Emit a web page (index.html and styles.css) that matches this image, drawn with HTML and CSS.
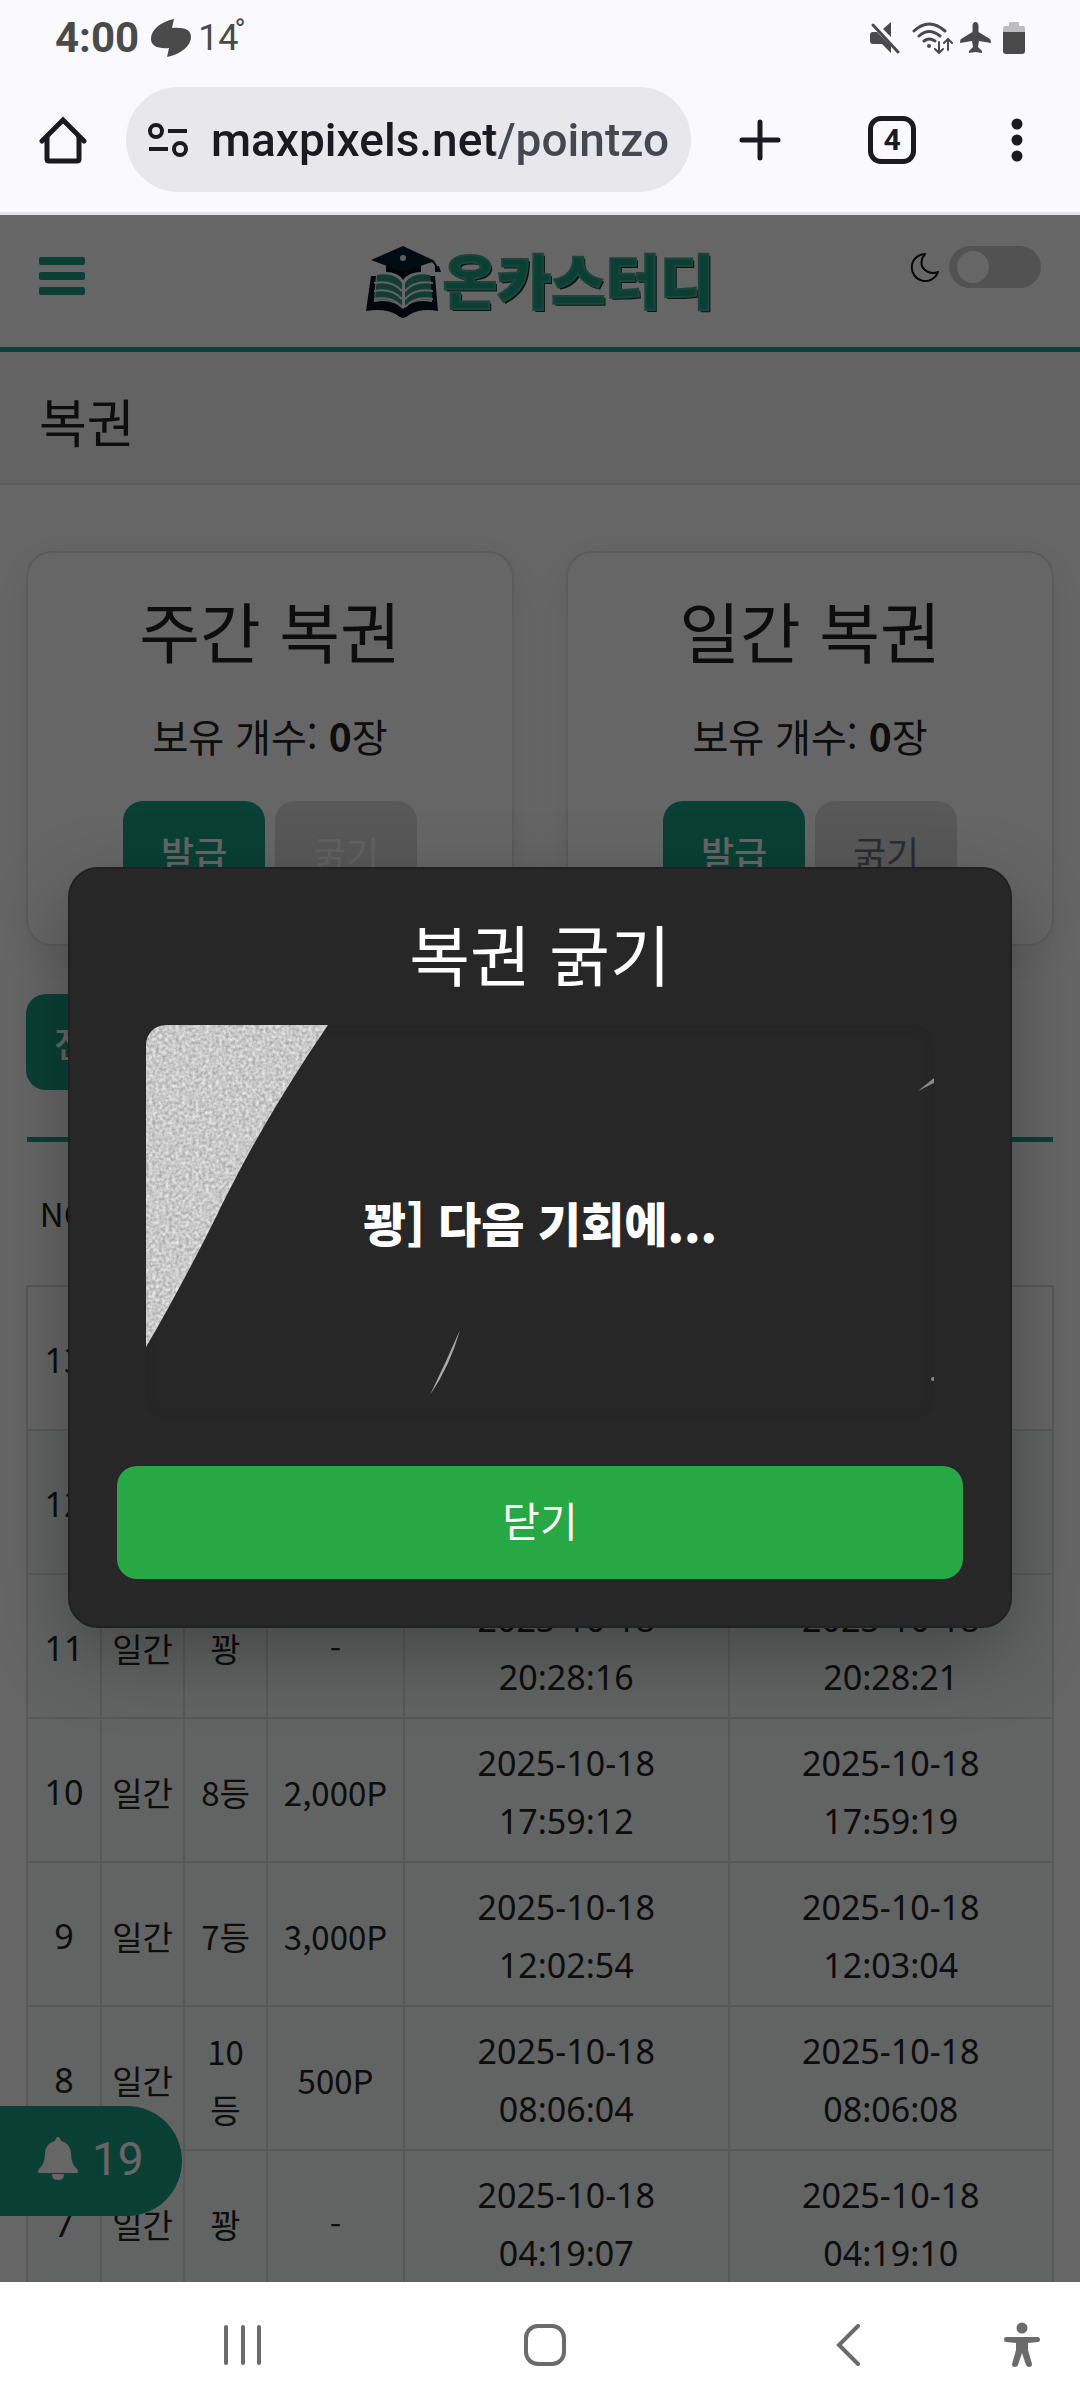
FILE: index.html
```html
<!DOCTYPE html>
<html lang="ko">
<head>
    <meta charset="UTF-8">
    <meta name="viewport" content="width=device-width, initial-scale=1">
    <title>복권</title>
    <link rel="stylesheet" href="styles.css">
</head>
<body>
    <div class="status-bar">
        <span class="clock">4:00</span>
        <svg class="weather-icon" width="40" height="38" viewBox="0 0 40 38"><path d="M23 0C9 3 0 11 0 20c0 7 7 10 18 9l-2 9c14-3 24-11 24-20 0-7-6-10-19-9z" fill="#4a4a4a"/></svg>
        <span class="temp">14<sup>°</sup></span>
        <div class="status-icons">
            <svg width="30" height="32" viewBox="0 0 30 32"><path d="M21 0v15l-8-8zM3 10h4l14 14v7l-9-9H3q-3 0-3-3v-6q0-3 3-3z" fill="#4a4a4a"/><path d="M3 3l25 27" stroke="#4a4a4a" stroke-width="3" stroke-linecap="round"/></svg>
            <svg class="wifi" width="42" height="32" viewBox="0 0 42 32" fill="none" stroke="#4a4a4a" stroke-width="3" stroke-linecap="round"><path d="M2 9q15-14 31 0M7 14q10-9 21 0M12 19q5-4 11 0"/><circle cx="17" cy="24" r="2" fill="#4a4a4a" stroke="none"/><path d="M27 20v10M23 27l4 4 4-4M36 28V18M32 21l4-4 4 4" stroke-width="2"/></svg>
            <svg width="31" height="31" viewBox="0 0 31 31"><path d="M15.500 0c2 0 3 2 3 4v6L30 17q1 1 1 4l-12-2-1 6 4 4v2l-6.500-1L9 31v-2l4-4-1-6-12 2q0-3 1-4l11.500-7V4c0-2 1-4 3-4z" fill="#4a4a4a"/></svg>
            <svg width="22" height="32" viewBox="0 0 22 32"><path d="M6 1q0-1 1-1h8q1 0 1 1v3h4q2 0 2 2v4H0V6q0-2 2-2h4z" fill="#bdbdc1"/><path d="M0 10h22v19q0 3-3 3H3q-3 0-3-3z" fill="#4a4a4a"/></svg>
        </div>
    </div>

    <div class="toolbar">
        <button class="icon-btn" aria-label="홈">
            <svg width="48" height="48" viewBox="0 0 48 48" fill="none" stroke="#1b1a20" stroke-width="5"><path d="M3 25L24 4l21 21" stroke-linecap="round"/><path d="M8 20v23q0 2 2 2h28q2 0 2-2V20"/></svg>
        </button>
        <div class="url-bar">
            <svg width="40" height="34" viewBox="0 0 40 34" fill="none" stroke="#1b1a20" stroke-width="4"><circle cx="8" cy="8" r="6"/><path d="M20 8h19M1 26h19"/><circle cx="32" cy="26" r="6"/></svg>
            <input type="text" class="url-input" value="maxpixels.net/pointzone" aria-label="주소">
        </div>
        <div class="toolbar-actions">
            <button class="icon-btn" aria-label="새 탭">
                <svg width="42" height="42" viewBox="0 0 42 42" stroke="#1b1a20" stroke-width="5" stroke-linecap="round"><path d="M21 3v36M3 21h36"/></svg>
            </button>
            <button class="tab-count">4</button>
            <button class="icon-btn" aria-label="메뉴">
                <svg width="12" height="44" viewBox="0 0 12 44" fill="#1b1a20"><circle cx="6" cy="6" r="5.500"/><circle cx="6" cy="22" r="5.500"/><circle cx="6" cy="38" r="5.500"/></svg>
            </button>
        </div>
    </div>

    <div class="viewport">
        <header class="site-header">
            <button class="menu-btn" aria-label="메뉴 열기"><span></span><span></span><span></span></button>
            <a href="#" class="logo">
                <svg width="76" height="72" viewBox="0 0 76 72">
                    <path d="M5 30h5l-2 26q18-4 29 7 11-11 29-7l-2-26h5l3 35q-18-3-29 4-3 3-6 3t-6-3q-11-7-31-4z" fill="#001522"/>
                    <path d="M11 29q18-3 25 8v25q-8-10-27-8zM64 29q-18-3-25 8v25q8-10 27-8z" fill="#31967e"/>
                    <path d="M8 37q18-3 28 8M8 45q18-3 28 8M8 53q18-3 28 8M67 37q-18-3-28 8M67 45q-18-3-28 8M67 53q-18-3-28 8" fill="none" stroke="#f4f8f6" stroke-width="2"/>
                    <path d="M20 17v9q12 0 17 8 6-8 18-8v-9z" fill="#000d1c"/>
                    <path d="M37 0l32 15-32 11L5 14z" fill="#002030"/>
                    <path d="M66 15q5 3 5 11" fill="none" stroke="#001522" stroke-width="2"/>
                    <path d="M69 20h4l2 6h-6z" fill="#001522"/>
                    <circle cx="37" cy="12" r="3" fill="#e8eeee"/>
                </svg>
                <span class="logo-text">온카스터디</span>
            </a>
            <label class="theme-switch">
                <svg width="30" height="30" viewBox="0 0 30 30" fill="none" stroke="#111" stroke-width="2" stroke-linejoin="round"><path d="M15 2A13.500 13.500 0 1 0 28 20Q19 23 13 16 9 9 15 2z"/></svg>
                <input type="checkbox" aria-label="다크 모드">
            </label>
        </header>

        <h1 class="page-title">복권</h1>

        <main class="content">
            <div class="cards">
                <section class="card">
                    <h2>주간 복권</h2>
                    <p>보유 개수: <strong>0</strong>장</p>
                    <div class="card-buttons">
                        <button class="btn btn-issue">발급</button>
                        <button class="btn btn-scratch" disabled>굵기</button>
                    </div>
                </section>
                <section class="card">
                    <h2>일간 복권</h2>
                    <p>보유 개수: <strong>0</strong>장</p>
                    <div class="card-buttons">
                        <button class="btn btn-issue">발급</button>
                        <button class="btn btn-scratch">굵기</button>
                    </div>
                </section>
            </div>

            <button class="btn btn-filter">전체</button>

            <table class="history">
                <colgroup>
                    <col class="col-no"><col class="col-type"><col class="col-rank"><col class="col-point"><col><col>
                </colgroup>
                <thead>
                    <tr><th>NO</th><th></th><th></th><th></th><th></th><th></th></tr>
                </thead>
                <tbody>
                    <tr><td class="num">13</td><td></td><td></td><td></td><td></td><td></td></tr>
                    <tr><td class="num">12</td><td></td><td></td><td></td><td></td><td></td></tr>
                    <tr><td class="num">11</td><td>일간</td><td>꽝</td><td>-</td><td class="num">2025-10-18 20:28:16</td><td class="num">2025-10-18 20:28:21</td></tr>
                    <tr><td class="num">10</td><td>일간</td><td>8등</td><td>2,000P</td><td class="num">2025-10-18 17:59:12</td><td class="num">2025-10-18 17:59:19</td></tr>
                    <tr><td class="num">9</td><td>일간</td><td>7등</td><td>3,000P</td><td class="num">2025-10-18 12:02:54</td><td class="num">2025-10-18 12:03:04</td></tr>
                    <tr><td class="num">8</td><td>일간</td><td>10등</td><td>500P</td><td class="num">2025-10-18 08:06:04</td><td class="num">2025-10-18 08:06:08</td></tr>
                    <tr><td class="num">7</td><td>일간</td><td>꽝</td><td>-</td><td class="num">2025-10-18 04:19:07</td><td class="num">2025-10-18 04:19:10</td></tr>
                </tbody>
            </table>
        </main>

        <button class="notice">
            <svg width="40" height="44" viewBox="0 0 40 44"><path d="M20 0q2 0 3 4 9 2 10 12 0 11 6 16 2 3 0 4H1q-2-1 0-4 6-5 6-16 1-10 10-12 1-4 3-4z" fill="#fff"/><path d="M14 37h12q0 6-6 6t-6-6z" fill="#fff"/></svg>
            <span>19</span>
        </button>

        <div class="overlay">
            <div class="modal" role="dialog" aria-labelledby="modal-title">
                <h2 id="modal-title">복권 굵기</h2>
                <div class="scratch">
                    <span class="result">꽝] 다음 기회에...</span>
                    <svg class="scratch-layer" viewBox="0 0 788 394">
                        <defs>
                            <filter id="grain" x="0" y="0" width="100%" height="100%" color-interpolation-filters="sRGB">
                                <feTurbulence type="fractalNoise" baseFrequency="0.3" numOctaves="2" seed="4"/>
                                <feColorMatrix values="0.4 0 0 0 0.59  0.4 0 0 0 0.59  0.4 0 0 0 0.59  0 0 0 0 1"/>
                                <feComposite in2="SourceGraphic" operator="in"/>
                            </filter>
                        </defs>
                        <path d="M0 0h182C122 88 88 155 71 190S16 296 0 322z" fill="#ccc" filter="url(#grain)"/>
                        <path d="M314 305q-10 36-30 65 16-33 30-65z" fill="#aaa"/>
                        <path d="M772 66l16-13v5z" fill="#888"/>
                        <circle cx="787" cy="354" r="2" fill="#888"/>
                    </svg>
                </div>
                <button class="btn-close">닫기</button>
            </div>
        </div>
    </div>

    <nav class="nav-bar">
        <button class="nav-btn recents" aria-label="최근 앱">
            <svg width="40" height="42" viewBox="0 0 40 42" stroke="#6b6b6b" stroke-width="4" stroke-linecap="round"><path d="M3 3v36M20 3v36M36 3v36"/></svg>
        </button>
        <button class="nav-btn home" aria-label="홈 화면">
            <svg width="42" height="42" viewBox="0 0 42 42" fill="none" stroke="#6b6b6b" stroke-width="4"><rect x="2" y="2" width="38" height="38" rx="12"/></svg>
        </button>
        <button class="nav-btn back" aria-label="뒤로">
            <svg width="24" height="42" viewBox="0 0 24 42" fill="none" stroke="#6b6b6b" stroke-width="4" stroke-linecap="round"><path d="M22 2L3 21l19 19"/></svg>
        </button>
        <button class="nav-btn a11y" aria-label="접근성">
            <svg width="36" height="46" viewBox="0 0 36 46" fill="#6b6b6b"><circle cx="18" cy="6" r="5.500"/><path d="M2 15h32q2 0 2 2.500T34 20l-10 1v7l4 14q0 3-3 3-2 0-3-2l-4-12-4 12q-1 2-3 2-3 0-3-3l4-14v-7L2 20q-2 0-2-2.500T2 15z"/></svg>
        </button>
    </nav>
</body>
</html>
```

FILE: styles.css
```css
* {
    box-sizing: border-box;
}

body {
    margin: 0;
    height: 100vh;
    display: flex;
    flex-direction: column;
    background: #fff;
    color: #222;
    font-family: "Noto Sans CJK KR", sans-serif;
}

h1, h2, p {
    margin: 0;
    font-weight: 400;
}

button {
    border: 0;
    padding: 0;
    background: none;
    color: inherit;
    font-family: inherit;
    cursor: pointer;
}

svg {
    display: block;
    flex: none;
}

/* status bar */
.status-bar {
    display: flex;
    align-items: center;
    height: 75px;
    padding: 0 55px;
    background: #faf9fe;
    color: #4a4a4a;
    font-family: Roboto, sans-serif;
}

.clock {
    font-size: 42px;
    font-weight: 700;
}

.weather-icon {
    margin: 0 7px 0 12px;
}

.temp {
    font-size: 36px;
}

.temp sup {
    margin-left: -4px;
    font-size: 30px;
    line-height: 0;
    vertical-align: 10px;
}

.status-icons {
    display: flex;
    align-items: center;
    gap: 12px;
    margin-left: auto;
}

.status-icons .wifi {
    margin-right: -6px;
}

/* browser toolbar */
.toolbar {
    display: flex;
    align-items: center;
    height: 140px;
    padding: 0 57px 8px 39px;
    border-bottom: 3px solid #e3e2e7;
    background: #faf9fe;
}

.url-bar {
    display: flex;
    flex: 1;
    align-items: center;
    gap: 23px;
    min-width: 0;
    height: 105px;
    margin: 0 48px 0 39px;
    padding: 0 22px;
    border-radius: 54px;
    background: #e8e7eb;
}

.url-input {
    flex: 1;
    min-width: 0;
    height: 64px;
    padding: 0;
    border: 0;
    outline: 0;
    background: linear-gradient(to right, #1b1a20 284px, #454850 284px);
    -webkit-background-clip: text;
    background-clip: text;
    color: transparent;
    font-family: Roboto, sans-serif;
    font-size: 46px;
    font-weight: 500;
}

.toolbar-actions {
    display: flex;
    flex: none;
    align-items: center;
    justify-content: space-between;
    width: 284px;
}

.tab-count {
    width: 48px;
    height: 48px;
    margin-right: 8px;
    border: 5px solid #1b1a20;
    border-radius: 13px;
    color: #1b1a20;
    font-family: Roboto, sans-serif;
    font-size: 30px;
    font-weight: 700;
}

/* page */
.viewport {
    position: relative;
    flex: 1;
    min-height: 0;
    overflow: hidden;
}

.site-header {
    display: grid;
    grid-template-columns: 1fr auto 1fr;
    align-items: start;
    height: 137px;
    padding: 31px 39px 0;
    border-bottom: 5px solid #1ba082;
}

.menu-btn {
    display: grid;
    gap: 7px;
    width: 46px;
    padding: 11px 0;
}

.menu-btn span {
    height: 8px;
    border-radius: 2px;
    background: #1ba082;
}

.logo {
    display: flex;
    align-items: center;
    gap: 1px;
    text-decoration: none;
}

.logo-text {
    color: #1ba082;
    font-size: 59px;
    font-weight: 900;
    line-height: 66px;
    padding-bottom: 6px;
    -webkit-text-stroke: 2px #4fa895;
    text-shadow: 2px 2px 0 #04382b;
}

.theme-switch {
    display: flex;
    align-items: center;
    justify-content: flex-end;
    gap: 9px;
}

.theme-switch input {
    display: flex;
    align-items: center;
    width: 92px;
    height: 42px;
    margin: 0;
    padding: 0 8px;
    border-radius: 21px;
    background: #ccc;
    appearance: none;
}

.theme-switch input::before {
    content: "";
    width: 32px;
    height: 32px;
    border-radius: 50%;
    background: #fff;
}

.page-title {
    padding: 6px 39px 0;
    border-bottom: 2px solid #e2e2e2;
    background: #f8f8f8;
    font-size: 52px;
    line-height: 125px;
}

.content {
    padding: 66px 26px 0;
}

.cards {
    display: grid;
    grid-template-columns: 1fr 1fr;
    gap: 52px;
    margin-bottom: 48px;
}

.card {
    padding: 26px 20px 39px;
    border: 2px solid #e4e4e4;
    border-radius: 26px;
    box-shadow: 0 10px 40px rgba(0, 0, 0, .08);
    text-align: center;
}

.card h2 {
    font-size: 66px;
    line-height: 100px;
}

.card p {
    margin: 26px 0 36px;
    font-size: 39px;
    line-height: 60px;
}

.card-buttons {
    display: flex;
    justify-content: center;
    gap: 10px;
}

.btn {
    border-radius: 20px;
    background: #1ba082;
    color: #fff;
    font-size: 36px;
    font-weight: 500;
}

.card .btn {
    width: 142px;
    height: 104px;
    padding-bottom: 2px;
}

.card .btn-scratch {
    background: #dcdcdc;
    color: #6c7176;
    font-weight: 400;
}

.card .btn-scratch:disabled {
    color: #f4f4f4;
}

.btn-filter {
    display: block;
    height: 96px;
    margin-bottom: 47px;
    padding: 0 28px;
}

/* history table */
.history {
    width: 100%;
    border-collapse: collapse;
    table-layout: fixed;
    text-align: center;
    font-size: 33px;
    line-height: 58px;
}

.col-no {
    width: 74px;
}

.col-type,
.col-rank {
    width: 83px;
}

.col-point {
    width: 137px;
}

.history th {
    height: 146px;
    padding: 0;
    border-top: 5px solid #1ba082;
    font-weight: 400;
}

.history td {
    height: 144px;
    padding: 15px 10px 11px;
    border: 2px solid #dcdcdc;
}

.history tbody tr:nth-child(n+2) {
    background: #f3f9f7;
}

.history .num {
    font-family: "Noto Sans", "Noto Sans CJK KR", sans-serif;
    font-size: 34px;
}

.notice {
    position: absolute;
    left: 0;
    bottom: 66px;
    display: flex;
    align-items: center;
    gap: 14px;
    height: 110px;
    padding: 0 38px 4px;
    border-radius: 0 55px 55px 0;
    background: #1ba082;
    color: #fff;
    font-family: Roboto, sans-serif;
    font-size: 46px;
}

/* modal */
.overlay {
    position: absolute;
    inset: 0;
    display: flex;
    align-items: center;
    padding: 0 68px 2px;
    background: rgba(0, 0, 0, .6);
}

.modal {
    width: 100%;
    padding: 47px;
    border: 2px solid #202020;
    border-radius: 30px;
    background: #272727;
    box-shadow: 0 26px 78px rgba(0, 0, 0, .3);
    color: #fff;
    text-align: center;
}

.modal h2 {
    margin-bottom: 37px;
    font-size: 66px;
    line-height: 72px;
}

.scratch {
    position: relative;
    display: flex;
    align-items: center;
    justify-content: center;
    aspect-ratio: 2 / 1;
    margin: 0 29px 47px;
    border-radius: 20px;
    box-shadow: inset 0 0 10px #242424;
    overflow: hidden;
}

.result {
    font-size: 47px;
    font-weight: 900;
    line-height: 56px;
}

.scratch-layer {
    position: absolute;
    inset: 0;
    width: 100%;
    height: 100%;
}

.btn-close {
    width: 100%;
    height: 113px;
    padding-bottom: 8px;
    border-radius: 20px;
    background: #28a745;
    font-size: 41px;
}

/* android navigation */
.nav-bar {
    display: grid;
    grid-template-columns: 45% 11% 24% 1fr;
    align-items: center;
    height: 126px;
    background: #fff;
}

.nav-btn {
    display: flex;
    justify-content: center;
}

.nav-btn.back,
.nav-btn.a11y {
    justify-content: flex-end;
}

.nav-btn.back {
    padding-right: 4px;
}

.nav-btn.a11y {
    padding-right: 40px;
}
```
